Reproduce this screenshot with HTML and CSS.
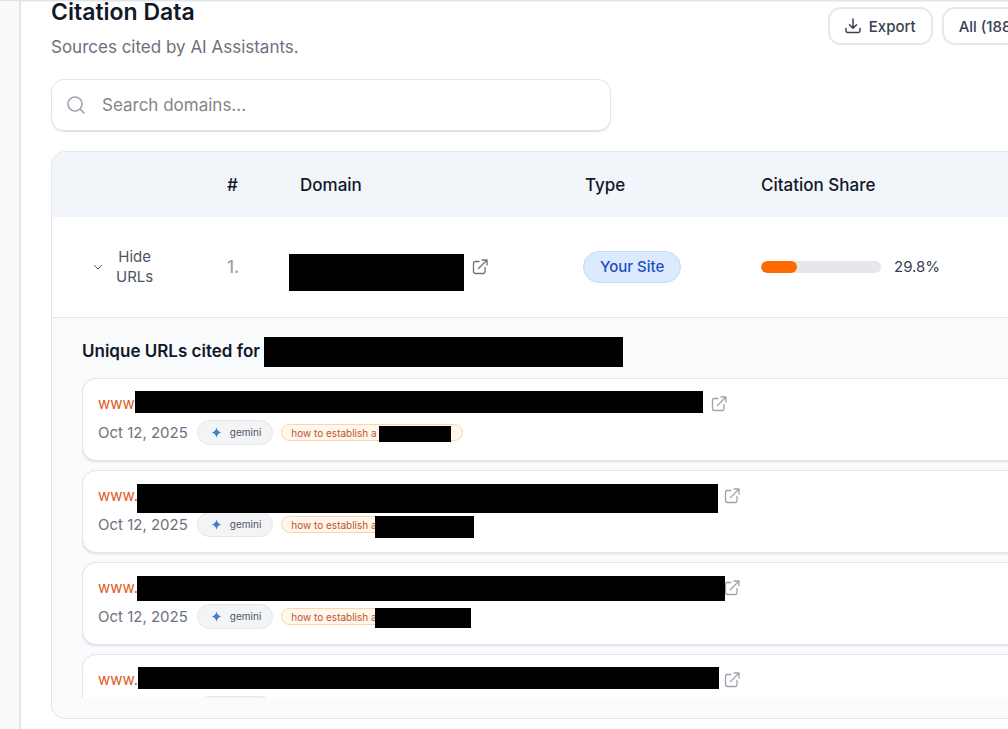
FILE: index.html
```html
<!DOCTYPE html>
<html lang="en">
<head>
<meta charset="utf-8">
<title>Citation Data</title>
<link rel="stylesheet" href="styles.css">
</head>
<body>
<svg class="sprite" aria-hidden="true">
  <symbol id="external" viewBox="0 0 16 16">
    <path d="M7 2.5H3.2a1.7 1.7 0 0 0-1.7 1.7v8.6a1.7 1.7 0 0 0 1.7 1.7h8.1a1.7 1.7 0 0 0 1.7-1.7V8.5M10 1h5v5M15 1 6.5 9.5"/>
  </symbol>
  <symbol id="spark" viewBox="0 0 12 12">
    <path d="M6 0.5Q6.9 5.1 11.5 6Q6.9 6.9 6 11.5Q5.1 6.9 0.5 6Q5.1 5.1 6 0.5Z"/>
  </symbol>
</svg>
<div class="app">
  <aside class="rail"></aside>
  <main class="main">
    <header class="head">
      <div>
        <h1 class="title">Citation Data</h1>
        <p class="subtitle">Sources cited by AI Assistants.</p>
      </div>
      <div class="actions">
        <button class="btn" type="button">
          <svg class="btn-icon" viewBox="0 0 16 16"><path d="M8 1v9M4.5 6.8 8 10.3l3.500-3.500M1 10.500v2.300a1.700 1.700 0 0 0 1.700 1.700h10.600a1.700 1.700 0 0 0 1.700-1.700v-2.300"/></svg>
          Export
        </button>
        <button class="btn" type="button">All (188)</button>
      </div>
    </header>

    <label class="search">
      <svg class="search-icon" viewBox="0 0 20 20"><circle cx="9" cy="9" r="7"/><path d="m14 14 4 4"/></svg>
      <input class="search-input" type="search" placeholder="Search domains..." aria-label="Search domains">
    </label>

    <section class="panel">
      <table class="table">
        <colgroup><col class="c-toggle"><col class="c-rank"><col class="c-domain"><col class="c-type"><col></colgroup>
        <thead>
          <tr><th></th><th>#</th><th>Domain</th><th>Type</th><th>Citation Share</th></tr>
        </thead>
        <tbody>
          <tr class="row">
            <td>
              <button class="toggle" type="button">
                <svg class="chevron" viewBox="0 0 10 10"><path d="m1.500 3.500 3.500 3.500 3.500-3.500"/></svg>
                <span>Hide<br>URLs</span>
              </button>
            </td>
            <td class="rank">1.</td>
            <td class="domain">
              <div class="domain-box">
                <span class="domain-mask"></span>
                <a href="#" aria-label="Open domain"><svg class="ext ext-dark"><use href="#external"/></svg></a>
              </div>
            </td>
            <td class="type"><span class="badge">Your Site</span></td>
            <td>
              <div class="share"><div class="track"><div class="fill" style="width:29.8%"></div></div><span>29.8%</span></div>
            </td>
          </tr>
        </tbody>
      </table>

      <div class="details">
        <h2 class="details-title">Unique URLs cited for<span class="title-mask"></span></h2>
        <ul class="list">
          <li class="card">
            <div class="url"><a class="link link-short" href="#">www<span class="mask m1"></span></a><svg class="ext"><use href="#external"/></svg></div>
            <div class="meta"><time>Oct 12, 2025</time><span class="model"><svg class="spark"><use href="#spark"/></svg>gemini</span><span class="tag">how to establish a <span class="tag-mask t1"></span></span></div>
          </li>
          <li class="card">
            <div class="url"><a class="link" href="#">www.<span class="mask m2"></span></a><svg class="ext"><use href="#external"/></svg></div>
            <div class="meta"><time>Oct 12, 2025</time><span class="model"><svg class="spark"><use href="#spark"/></svg>gemini</span><span class="tag">how to establish a <span class="tag-mask t2"></span></span></div>
          </li>
          <li class="card">
            <div class="url"><a class="link" href="#">www.<span class="mask m3"></span></a><svg class="ext"><use href="#external"/></svg></div>
            <div class="meta"><time>Oct 12, 2025</time><span class="model"><svg class="spark"><use href="#spark"/></svg>gemini</span><span class="tag">how to establish a <span class="tag-mask t3"></span></span></div>
          </li>
          <li class="card">
            <div class="url"><a class="link" href="#">www.<span class="mask m4"></span></a><svg class="ext"><use href="#external"/></svg></div>
            <div class="meta"><span class="model model-last"></span></div>
          </li>
        </ul>
      </div>
    </section>
  </main>
</div>
</body>
</html>
```

FILE: styles.css
```css
* { box-sizing: border-box; }

body {
  margin: 0;
  overflow: hidden;
  background: #fff;
  color: #111827;
  font-family: Inter, "Liberation Sans", sans-serif;
  font-size: 15px;
}

h1, h2, p, ul { margin: 0; padding: 0; }
button, input { font: inherit; color: inherit; }
svg { flex: none; fill: none; stroke: currentColor; stroke-linecap: round; stroke-linejoin: round; }
.sprite { position: absolute; width: 0; height: 0; }

.app {
  display: flex;
  min-height: 100vh;
  overflow: hidden;
  border-top: 1px solid #e2e4e7;
  box-shadow: 0 1px #f1f2f3 inset;
}
.rail { flex: none; width: 21px; background: #f9fafc; border-right: 2px solid #e3e5e9; }

/* The content column runs past the right edge of the viewport. */
.main { flex: none; width: calc(100% + 50px); padding-left: 30px; }

.head { display: flex; justify-content: space-between; }
.title { font-size: 23px; line-height: 28px; font-weight: 600; margin-top: -3px; }
.subtitle { margin-top: 7px; font-size: 17px; line-height: 28px; color: #6b7280; }

.actions { display: flex; align-items: flex-start; gap: 9px; padding: 6px 45px 0 0; }
.btn {
  display: flex;
  align-items: center;
  gap: 8px;
  height: 38px;
  padding: 0 15px;
  border: 2px solid #e5e7eb;
  border-radius: 13px;
  background: #fff;
  color: #374151;
  font-weight: 500;
  white-space: nowrap;
}
.btn-icon { width: 16px; height: 16px; stroke-width: 1.5; }

.search {
  display: flex;
  align-items: center;
  gap: 16px;
  width: 560px;
  height: 52px;
  margin-top: 18px;
  padding: 0 14px;
  border: 1px solid #e2e4e8;
  border-radius: 13px;
  box-shadow: 0 1px 1px #dcdee2;
}
.search-icon { width: 20px; height: 20px; color: #9ca3af; stroke-width: 1.6; }
.search-input { flex: 1; min-width: 0; padding: 0; border: 0; outline: 0; background: none; font-size: 17px; }
.search-input::placeholder { color: #858585; opacity: 1; }

.panel {
  margin-top: 20px;
  overflow: hidden;
  border: 1px solid #e2e6eb;
  border-radius: 14px;
  background: #fafbfd;
}

.table { width: 100%; table-layout: fixed; border-collapse: collapse; }
.c-toggle { width: 159px; }
.c-rank { width: 73px; }
.c-domain { width: 285px; }
.c-type { width: 176px; }
.table th { height: 65px; padding: 0 16px; background: #f2f6fb; text-align: left; font-size: 17px; font-weight: 500; }
.table td { height: 100px; padding: 0 16px; background: #fff; }
.row { border-bottom: 1px solid #e2e6eb; }

.toggle {
  display: flex;
  align-items: center;
  gap: 13px;
  margin-left: 25px;
  padding: 0;
  border: 0;
  background: none;
  color: #4b5563;
  line-height: 20px;
  text-align: center;
}
.chevron { width: 10px; height: 10px; }
.table .rank { color: #9ca3af; font-size: 17px; font-weight: 500; }
.table .domain { padding: 0 5px; }
.domain-box { display: flex; align-items: center; gap: 8px; color: #6b7280; }
.domain-box a { display: flex; color: inherit; }
.domain-mask { width: 175px; height: 37px; margin-top: 12px; background: #000; }
.ext { width: 16px; height: 16px; color: #9ca3af; stroke-width: 1.3; }
.ext-dark { color: #6b7280; }

.table .type { padding: 0 14px; }
.badge {
  display: inline-block;
  padding: 0 16px;
  border: 1px solid #bfdbfe;
  border-radius: 16px;
  background: #dbeafe;
  color: #1e4fc2;
  font-weight: 500;
  line-height: 30px;
  vertical-align: middle;
}
.share { display: flex; align-items: center; gap: 13px; color: #374151; }
.track { width: 120px; height: 12px; overflow: hidden; border-radius: 6px; background: #e5e7eb; }
.fill { height: 100%; border-radius: 6px; background: #ff6900; }

.details { padding: 20px 30px; }
.details-title { position: relative; width: max-content; font-size: 17px; line-height: 26px; font-weight: 600; }
.title-mask { position: absolute; top: -1px; left: 182px; width: 359px; height: 30px; background: #000; }

.list { display: flex; flex-direction: column; gap: 9px; height: 320px; margin-top: 14px; overflow: hidden; list-style: none; }
.card {
  flex: none;
  padding: 14px 15px 15px;
  border: 1px solid #e2e6eb;
  border-radius: 14px;
  background: #fff;
  box-shadow: 0 1px 2px #d8dbe0;
}
.url { display: flex; align-items: center; gap: 8px; height: 22px; }
.link { position: relative; width: 618px; line-height: 22px; color: #e05a22; text-decoration: none; }
.link-short { width: 605px; }
.mask { position: absolute; background: #000; }
.m1 { top: -2px; left: 37px; width: 568px; height: 22px; }
.m2 { top: -1px; left: 39px; width: 581px; height: 29px; }
.m3 { top: -1px; left: 39px; width: 588px; height: 25px; }
.m4 { top: -2px; left: 40px; width: 581px; height: 22px; }

.meta { display: flex; align-items: center; height: 25px; margin-top: 5px; color: #6b7280; }
.model {
  display: flex;
  align-items: center;
  gap: 8px;
  height: 25px;
  margin: 0 8px 0 9px;
  padding: 0 11px 0 13px;
  border: 1px solid #e5e7eb;
  border-radius: 13px;
  background: #f3f4f6;
  color: #4b5563;
  font-size: 10px;
}
.model-last { width: 76px; margin-left: 99px; }
.spark { width: 11px; height: 11px; fill: #4080c8; stroke: none; }
.tag {
  position: relative;
  width: 182px;
  height: 17px;
  padding: 0 9px;
  border: 1px solid #fcd5ac;
  border-radius: 9px;
  background: #fff6ec;
  color: #c2532d;
  font-size: 10px;
  line-height: 16px;
  white-space: nowrap;
}
.tag-mask { position: absolute; background: #000; }
.t1 { top: 1px; left: 97px; width: 72px; height: 16px; }
.t2 { top: -1px; left: 93px; width: 99px; height: 22px; }
.t3 { top: -1px; left: 93px; width: 96px; height: 20px; }
```
